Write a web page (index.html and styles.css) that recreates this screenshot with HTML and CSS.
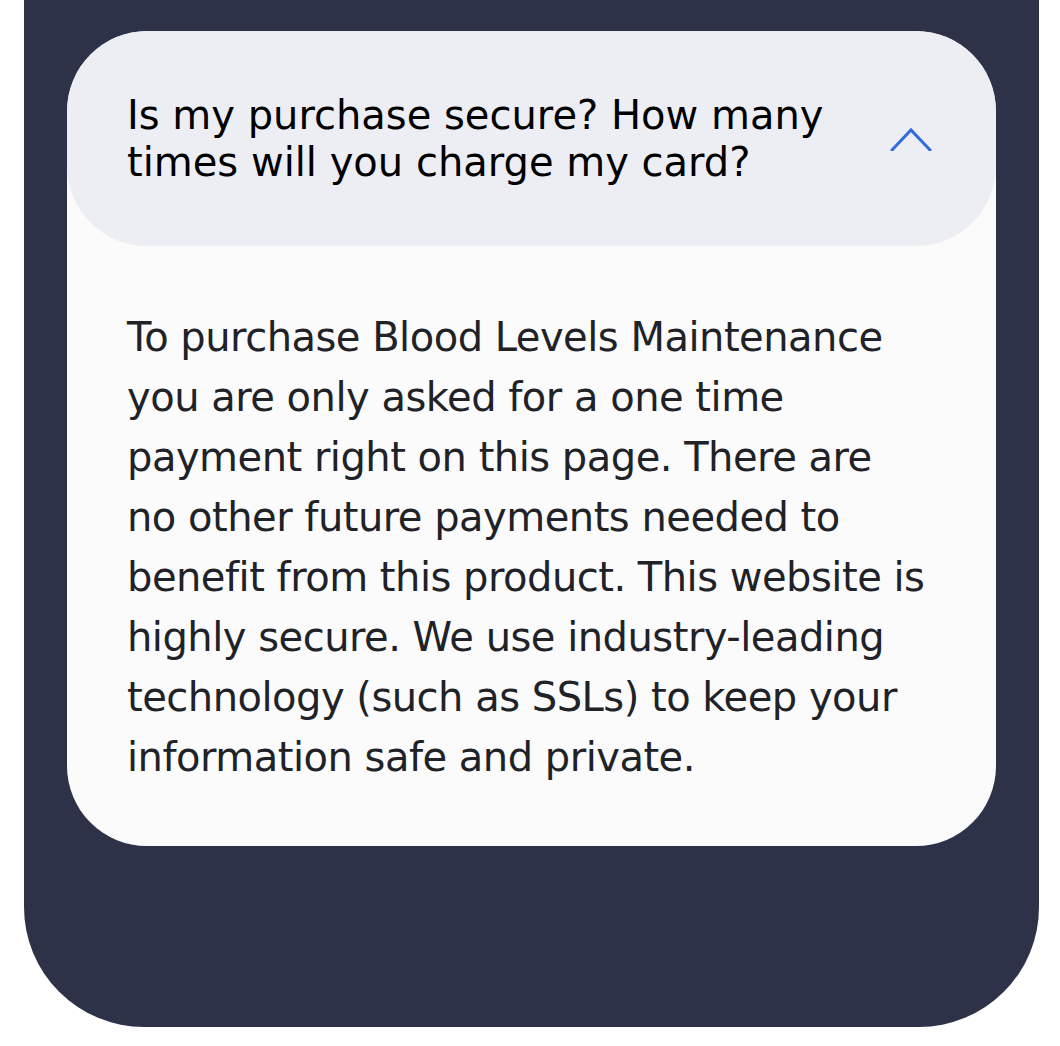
FILE: index.html
```html
<!DOCTYPE html>
<html lang="en">
<head>
<meta charset="utf-8">
<link rel="stylesheet" href="styles.css">
</head>
<body>
<section class="panel">
  <div class="faq">
    <div class="faq-head">
      <h3 class="faq-q">Is my purchase secure? How many<br>times will you charge my card?</h3>
      <svg class="chev" width="42" height="24" viewBox="0 0 42 24" aria-hidden="true">
        <path d="M2 23 L21 3 L40 23" fill="none" stroke="#2f6ae0" stroke-width="3" stroke-linecap="round" stroke-linejoin="miter"/>
      </svg>
    </div>
    <div class="faq-body">
      <p class="faq-a">To purchase Blood Levels Maintenance<br>you are only asked for a one time<br>payment right on this page. There are<br>no other future payments needed to<br>benefit from this product. This website is<br>highly secure. We use industry-leading<br>technology (such as SSLs) to keep your<br>information safe and private.</p>
    </div>
  </div>
</section>
</body>
</html>
```
FILE: styles.css
```css
html, body {
  margin: 0;
  padding: 0;
  background: #ffffff;
}
body {
  font-family: "DejaVu Sans", sans-serif;
}
.panel {
  margin-left: 24px;
  width: 1015px;
  height: 1027px;
  box-sizing: border-box;
  padding: 31px 43px 0;
  background: #2e3249;
  border-radius: 0 0 120px 120px;
}
.faq {
  background: #fbfbfb;
  border-radius: 80px;
  overflow: hidden;
}
.faq-head {
  height: 215px;
  box-sizing: border-box;
  padding: 0 64px 0 60px;
  display: flex;
  align-items: center;
  justify-content: space-between;
  background: #edeef4;
  border-radius: 80px;
}
.faq-q {
  margin: 0;
  white-space: nowrap;
  font-size: 40px;
  font-weight: 400;
  line-height: 47px;
  color: #000000;
}
.chev {
  flex: none;
}
.faq-body {
  padding: 61px 60px 59px;
}
.faq-a {
  margin: 0;
  white-space: nowrap;
  font-size: 40px;
  letter-spacing: -0.5px;
  line-height: 60px;
  color: #202228;
}
```
